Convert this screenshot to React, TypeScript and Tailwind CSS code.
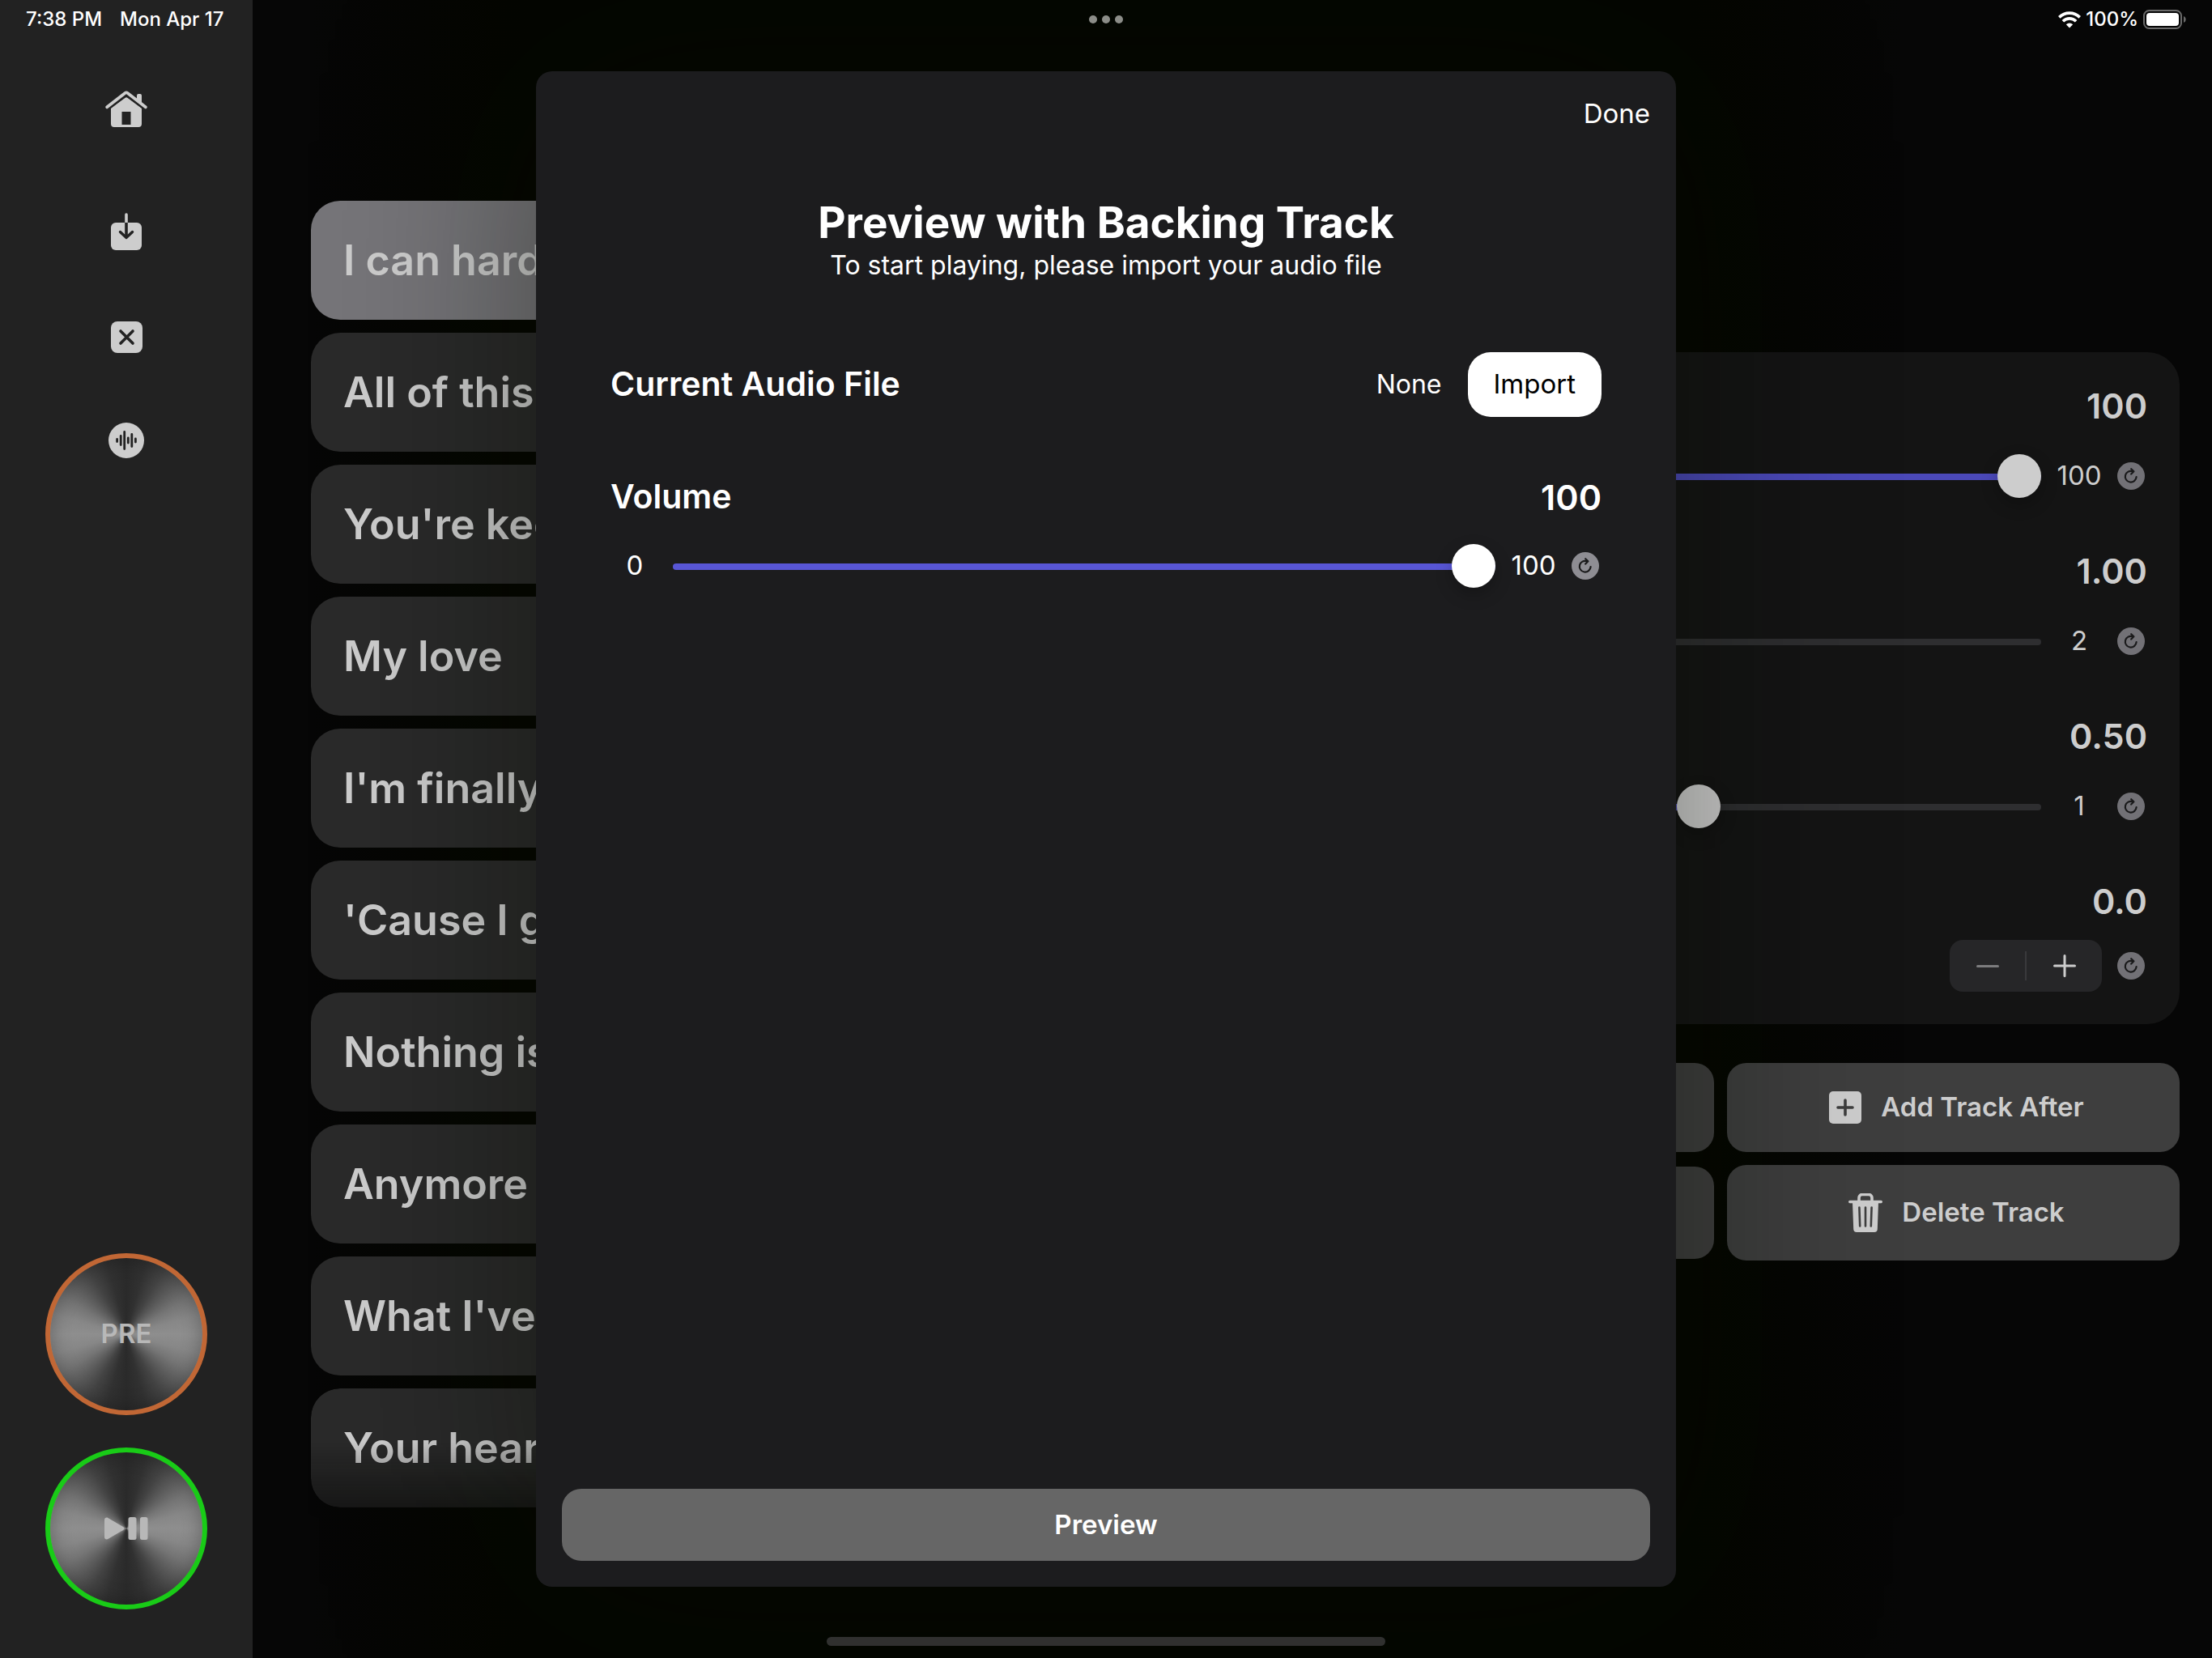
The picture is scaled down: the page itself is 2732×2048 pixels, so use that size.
import React from "react";

const tracks = [
  "I can hardly",
  "All of this",
  "You're keen",
  "My love",
  "I'm finally",
  "'Cause I go",
  "Nothing is",
  "Anymore",
  "What I've",
  "Your heart",
];

function HomeIcon() {
  return (
    <svg width="52" height="46" viewBox="0 0 52 46" fill="#cdcdcd" aria-hidden="true">
      <path d="M7 21.500 24.600 8.800a2.200 2.200 0 0 1 2.800 0L45 21.500V41a4 4 0 0 1-4 4H11a4 4 0 0 1-4-4z" />
      <path d="M2.200 24 24.400 7a2.700 2.700 0 0 1 3.200 0l22.200 17" fill="none" stroke="#222222" strokeWidth="2.600" />
      <path d="M39 13V6a2 2 0 0 1 2-2h2a2 2 0 0 1 2 2v12z" />
      <path d="M2.200 20.300 24.400 3a2.700 2.700 0 0 1 3.200 0l22.200 17.300" fill="none" stroke="#cdcdcd" strokeWidth="3.800" strokeLinecap="round" />
      <rect x="20.500" y="26" width="11" height="16" fill="#222222" />
    </svg>
  );
}

function ImportIcon() {
  return (
    <svg width="40" height="48" viewBox="0 0 40 48" fill="none" strokeLinecap="round" strokeLinejoin="round" aria-hidden="true">
      <path d="M20 3v12" stroke="#cdcdcd" strokeWidth="3.600" />
      <rect x="1" y="13" width="38" height="34" rx="6" fill="#cdcdcd" />
      <path d="M20 13v18" stroke="#222222" strokeWidth="3.600" strokeLinecap="butt" />
      <path d="m12.500 24.500 7.500 7 7.500-7" stroke="#222222" strokeWidth="3.400" />
    </svg>
  );
}

function ClearIcon() {
  return (
    <svg width="39" height="39" viewBox="0 0 39 39" fill="none" strokeLinecap="round" aria-hidden="true">
      <rect width="39" height="39" rx="8" fill="#cdcdcd" />
      <path d="m12 12 15 15M27 12 12 27" stroke="#222222" strokeWidth="3.600" />
    </svg>
  );
}

function WaveIcon() {
  return (
    <svg width="44" height="44" viewBox="0 0 44 44" fill="none" strokeLinecap="round" aria-hidden="true">
      <circle cx="22" cy="22" r="22" fill="#cdcdcd" />
      <path d="M10.600 20.500v3M15.200 16.500v11M19.700 11.500v21M24.300 19v6M28.800 14.500v15M33.400 20v4" stroke="#222222" strokeWidth="2.800" />
    </svg>
  );
}

function ResetIcon() {
  return (
    <svg className="block size-[34px]" viewBox="0 0 34 34" fill="none" strokeLinecap="round" strokeLinejoin="round" aria-hidden="true">
      <circle cx="17" cy="17" r="17" fill="currentColor" />
      <path d="M19 11.200A6.900 6.900 0 1 0 23.600 18.200" stroke="#1a1a1b" strokeWidth="2.200" />
      <path d="m17.200 8.200 3.200 3-3.200 3.400" stroke="#1a1a1b" strokeWidth="2.200" />
    </svg>
  );
}

function PlusBoxIcon() {
  return (
    <svg width="40" height="40" viewBox="0 0 40 40" fill="none" strokeLinecap="round" aria-hidden="true">
      <rect width="40" height="40" rx="5" fill="#cdcdcd" />
      <path d="M20 11v18M11 20h18" stroke="#3e3e3e" strokeWidth="3.600" />
    </svg>
  );
}

function TrashIcon() {
  return (
    <svg width="42" height="48" viewBox="0 0 42 48" fill="none" strokeLinecap="round" aria-hidden="true">
      <path d="M13 10V5.500a4 4 0 0 1 4-4h8a4 4 0 0 1 4 4V10" stroke="#cdcdcd" strokeWidth="3.600" />
      <path d="M1.700 10.500h38.600" stroke="#cdcdcd" strokeWidth="3.400" />
      <path d="M5 11h32l-1.200 33a4 4 0 0 1-4 4H10.200a4 4 0 0 1-4-4z" fill="#cdcdcd" />
      <path d="m13.400 17.500.8 23M21 17.500v23M28.600 17.500l-.8 23" stroke="#3e3e3e" strokeWidth="2.600" />
    </svg>
  );
}

function PlayPauseIcon() {
  return (
    <svg width="54" height="28" viewBox="0 0 54 28" fill="#b8b8b8" aria-hidden="true">
      <path d="M0 3.200C0 .8 2.400-.2 4.400.9l18.300 10.800c2 1.200 2 3.400 0 4.600L4.400 27.100C2.400 28.200 0 27.200 0 24.800z" />
      <rect x="29.500" width="10" height="28" rx="2.500" />
      <rect x="44" width="9.500" height="28" rx="2.500" />
    </svg>
  );
}

function WifiIcon() {
  return (
    <svg width="28" height="21" viewBox="0 0 28 21" fill="none" stroke="#ffffff" aria-hidden="true">
      <path d="M1.300 7.400a18 18 0 0 1 25.400 0" strokeWidth="3.600" />
      <path d="M5.900 12.200a11.500 11.500 0 0 1 16.200 0" strokeWidth="3.600" />
      <path d="M14 20.500 9.800 16.200a6 6 0 0 1 8.400 0z" fill="#ffffff" stroke="none" />
    </svg>
  );
}

function BatteryIcon() {
  return (
    <svg width="53" height="24" viewBox="0 0 53 24" fill="none" aria-hidden="true">
      <rect x="1" y="1" width="46" height="22" rx="6.500" stroke="#6a6a6a" strokeWidth="2" />
      <rect x="4" y="4" width="40" height="16" rx="4" fill="#ffffff" />
      <path d="M50 8c3.500 1.200 3.500 6.800 0 8z" fill="#6a6a6a" />
    </svg>
  );
}

type SliderProps = {
  label: string;
  value: number;
  min?: number;
  max: number;
  step: number;
  dim?: boolean;
};

function Slider({ label, value, min = 0, max, step, dim }: SliderProps) {
  const ratio = ((value - min) / (max - min)) * 100;
  return (
    <span className="relative flex h-[54px] min-w-0 flex-1 items-center">
      <span className={`mt-0.5 flex h-2 w-full overflow-hidden rounded-full ${dim ? "bg-[#2e2e30]" : "bg-[#39393d]"}`}>
        <span className={`h-full ${dim ? "bg-[#4b49b8]" : "bg-[#5856d6]"}`} style={{ width: `${ratio}%` }} />
      </span>
      <input
        type="range"
        aria-label={label}
        defaultValue={value}
        min={min}
        max={max}
        step={step}
        className={`absolute inset-0 m-0 h-full w-full appearance-none bg-transparent [&::-webkit-slider-thumb]:size-[54px] [&::-webkit-slider-thumb]:appearance-none [&::-webkit-slider-thumb]:rounded-full [&::-webkit-slider-thumb]:shadow-[0_8px_20px_rgba(0,0,0,0.25)] ${dim ? "[&::-webkit-slider-thumb]:bg-[#cdcdcd]" : "[&::-webkit-slider-thumb]:bg-white"}`}
      />
    </span>
  );
}

type SliderRowProps = SliderProps & { maxLabel: string };

function SliderRow({ maxLabel, ...slider }: SliderRowProps) {
  return (
    <div className="flex items-center">
      <span className="w-[60px] text-center text-[33px]">{slider.min ?? 0}</span>
      <span className="ml-[17px] flex min-w-0 flex-1">
        <Slider {...slider} />
      </span>
      <span className="ml-2 w-[78px] text-center text-[33px]">{maxLabel}</span>
      <button type="button" aria-label={`Reset ${slider.label}`} className={`ml-2 mr-[3px] ${slider.dim ? "text-[#727176]" : "text-[#8e8d93]"}`}>
        <ResetIcon />
      </button>
    </div>
  );
}

type SettingProps = { label: string; value: string; children: React.ReactNode };

function Setting({ label, value, children }: SettingProps) {
  return (
    <div className="h-[204px]">
      <div className="flex h-[60px] items-center justify-between text-[43px] font-semibold">
        <span>{label}</span>
        <span>{value}</span>
      </div>
      {children}
    </div>
  );
}

const metal =
  "flex size-[200px] items-center justify-center rounded-full border-[6px] bg-[conic-gradient(#2a2a2a_0deg,#313131_15deg,#434343_30deg,#5c5c5c_45deg,#757575_60deg,#878787_75deg,#8e8e8e_90deg,#878787_105deg,#757575_120deg,#5c5c5c_135deg,#434343_150deg,#313131_165deg,#2a2a2a_180deg,#313131_195deg,#434343_210deg,#5c5c5c_225deg,#757575_240deg,#878787_255deg,#8e8e8e_270deg,#878787_285deg,#757575_300deg,#5c5c5c_315deg,#434343_330deg,#313131_345deg,#2a2a2a_360deg)] bg-origin-border text-[33px] font-semibold text-[#b8b8b8] shadow-[inset_0_0_24px_rgba(0,0,0,0.3)]";

const action = "flex items-center justify-center gap-6 rounded-3xl bg-[#3e3e3e] pl-2 text-[33px] font-semibold";

export default function App() {
  return (
    <div className="relative flex h-screen min-h-[2048px] overflow-hidden bg-[linear-gradient(to_right,#060606_14%,#040600_24%,#040600_76%,#060606_86%)] font-['Inter',sans-serif] text-[#cdcdcd]">
      <aside className="flex w-[312px] shrink-0 flex-col items-center bg-[#222222] pt-[112px] pb-[60px]">
        <nav className="flex flex-col items-center" aria-label="Tools">
          <button type="button" aria-label="Home"><HomeIcon /></button>
          <button type="button" aria-label="Import" className="mt-[104px]"><ImportIcon /></button>
          <button type="button" aria-label="Clear" className="mt-[87px]"><ClearIcon /></button>
          <button type="button" aria-label="Backing track" className="mt-[86px]"><WaveIcon /></button>
        </nav>
        <div className="mt-auto flex flex-col gap-10">
          <button type="button" className={`${metal} border-[#c16735]`}>PRE</button>
          <button type="button" aria-label="Play or pause" className={`${metal} border-[#19cb17]`}><PlayPauseIcon /></button>
        </div>
      </aside>

      <main className="grid min-w-0 flex-1 grid-cols-2 gap-10 pr-10 pl-[72px]">
        <ol className="mt-[248px] flex flex-col gap-4">
          {tracks.map((name, i) => (
            <li key={name}>
              <button
                type="button"
                className={`flex h-[147px] w-full items-center overflow-hidden rounded-[36px] px-10 text-left text-[52px] font-semibold whitespace-nowrap ${i === 0 ? "bg-[#767579]" : "bg-[#2a2a2a]"} ${i === tracks.length - 1 ? "[mask-image:linear-gradient(to_bottom,#000_45%,rgba(0,0,0,0.5))]" : ""}`}
              >
                {name}
              </button>
            </li>
          ))}
        </ol>

        <div className="mt-[435px]">
          <section aria-label="Track settings" className="h-[830px] rounded-[40px] bg-[#141414] px-10 pt-9">
            <Setting label="Gain" value="100">
              <div className="pt-[30px]">
                <SliderRow label="Track gain" value={100} max={100} step={1} maxLabel="100" dim />
              </div>
            </Setting>
            <Setting label="Speed" value="1.00">
              <div className="pt-[30px]">
                <SliderRow label="Track speed" value={1} min={0.5} max={2} step={0.01} maxLabel="2" dim />
              </div>
            </Setting>
            <Setting label="Pan" value="0.50">
              <div className="pt-[30px]">
                <SliderRow label="Track pan" value={0.5} max={1} step={0.01} maxLabel="1" dim />
              </div>
            </Setting>
            <Setting label="Pitch" value="0.0">
              <div className="flex items-center justify-end pt-[18px]">
                <div className="flex h-16 w-[188px] items-center rounded-2xl bg-[#262628]">
                  <button type="button" aria-label="Decrease pitch" className="flex flex-1 justify-center">
                    <span className="h-[3px] w-7 rounded-full bg-[#7c7c7e]" />
                  </button>
                  <span className="h-9 w-0.5 bg-[#39393c]" />
                  <button type="button" aria-label="Increase pitch" className="flex flex-1 justify-center">
                    <svg width="28" height="28" viewBox="0 0 28 28" stroke="#cdcdcd" strokeWidth="3" strokeLinecap="round" aria-hidden="true">
                      <path d="M14 1.500v25M1.500 14h25" />
                    </svg>
                  </button>
                </div>
                <button type="button" aria-label="Reset pitch" className="mr-[3px] ml-[19px] text-[#727176]">
                  <ResetIcon />
                </button>
              </div>
            </Setting>
          </section>

          <div className="mt-12 grid grid-cols-2 items-center gap-4">
            <button type="button" className={`${action} h-[110px]`}>Add Track Before</button>
            <button type="button" className={`${action} h-[110px]`}><PlusBoxIcon />Add Track After</button>
            <button type="button" className={`${action} h-[114px]`}>Duplicate</button>
            <button type="button" className={`${action} h-[118px]`}><TrashIcon />Delete Track</button>
          </div>
        </div>
      </main>

      <div className="pointer-events-none absolute inset-0 flex flex-col items-center justify-center">
        <div
          role="dialog"
          aria-labelledby="dialog-title"
          className="pointer-events-auto flex h-[1872px] w-[1408px] flex-col rounded-[20px] bg-[#1c1c1e] p-8 text-white shadow-[0_0_280px_rgba(6,12,0,0.45)]"
        >
          <button type="button" className="h-10 self-end text-[33px] leading-10">Done</button>
          <header className="mt-[82px] text-center">
            <h1 id="dialog-title" className="text-[53px] leading-[66px] font-bold">Preview with Backing Track</h1>
            <p className="text-[32px] leading-10">To start playing, please import your audio file</p>
          </header>
          <div className="mx-[60px] mt-[87px] flex h-20 items-center">
            <h2 className="flex-1 text-[41px] font-semibold">Current Audio File</h2>
            <span className="text-[32px]">None</span>
            <button type="button" className="ml-8 h-20 rounded-[28px] bg-white px-8 text-[33px] text-black">Import</button>
          </div>
          <div className="mx-[60px] mt-[69px]">
            <div className="flex h-[60px] items-center justify-between font-semibold">
              <h2 className="text-[41px]">Volume</h2>
              <span className="text-[43px]">100</span>
            </div>
            <div className="mt-7">
              <SliderRow label="Volume" value={100} max={100} step={1} maxLabel="100" />
            </div>
          </div>
          <button type="button" className="mt-auto h-[89px] rounded-3xl bg-[#666666] text-[33px] font-semibold">Preview</button>
        </div>
      </div>

      <div className="absolute inset-x-0 top-0 grid h-12 grid-cols-3 items-center px-8 text-[24px] font-medium text-white">
        <div className="flex gap-[22px]">
          <span>7:38 PM</span>
          <span>Mon Apr 17</span>
        </div>
        <button type="button" aria-label="Window options" className="flex gap-1.5 justify-self-center">
          <span className="size-2.5 rounded-full bg-[#8c8d88]" />
          <span className="size-2.5 rounded-full bg-[#8c8d88]" />
          <span className="size-2.5 rounded-full bg-[#8c8d88]" />
        </button>
        <div className="flex items-center justify-end gap-1.5">
          <WifiIcon />
          <span>100%</span>
          <BatteryIcon />
        </div>
      </div>

      <div className="absolute inset-x-0 bottom-[15px] flex justify-center">
        <span className="h-[11px] w-[690px] rounded-full bg-[#30302f]" />
      </div>
    </div>
  );
}
